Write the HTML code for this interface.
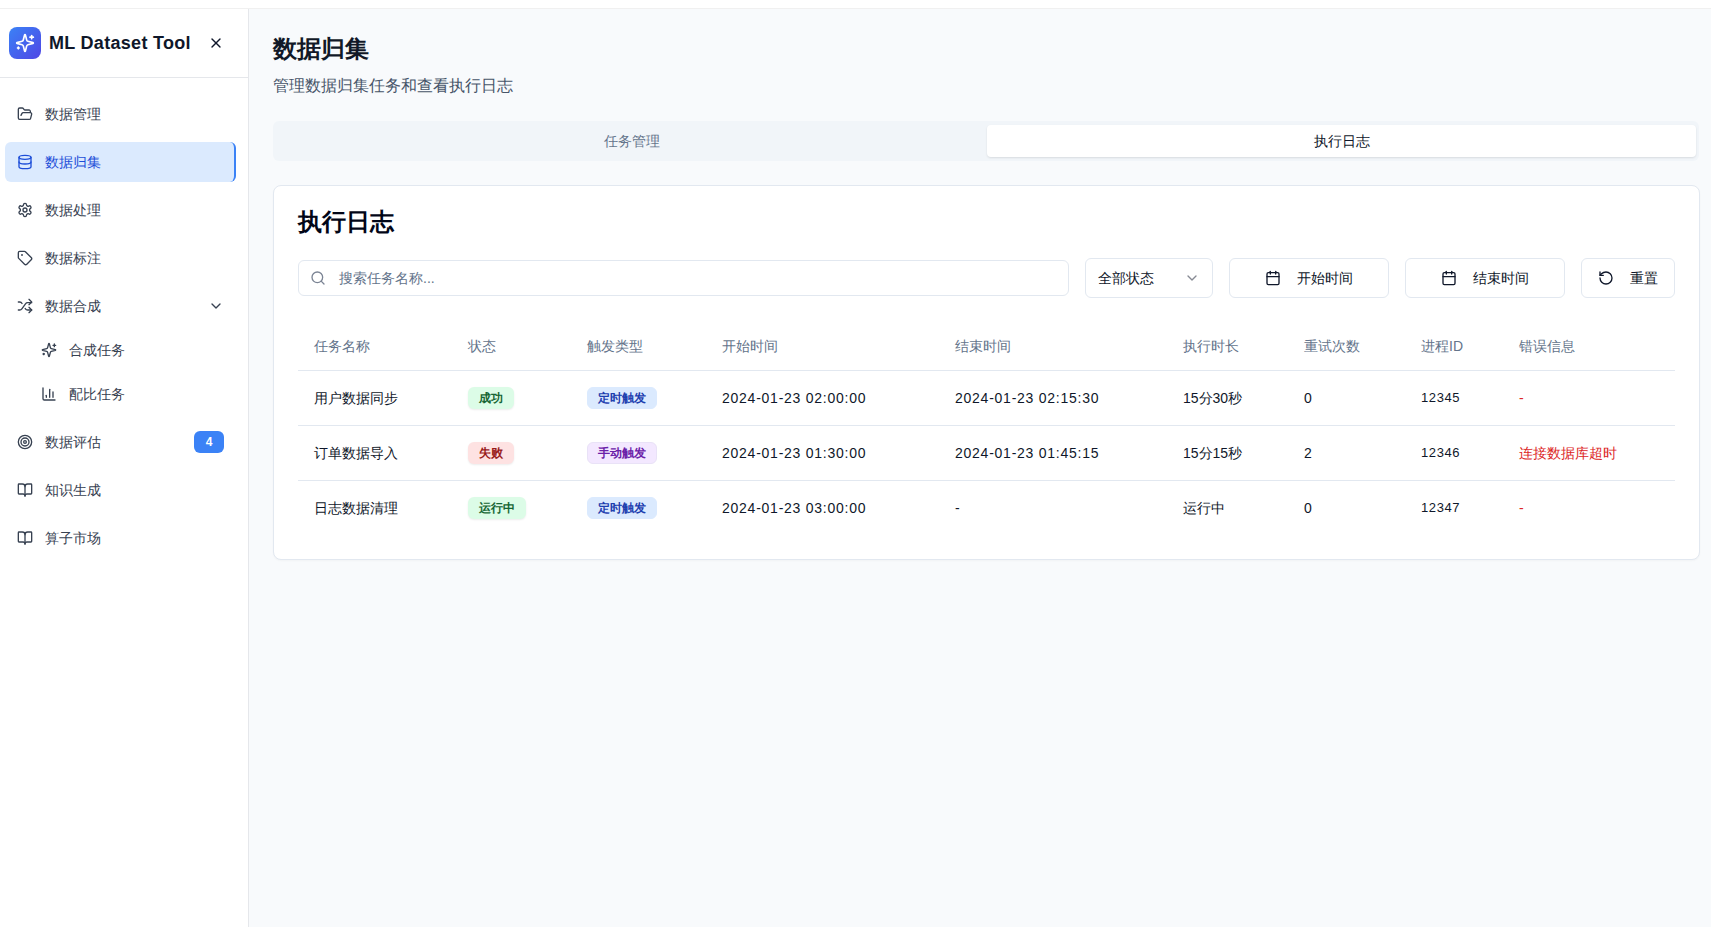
<!DOCTYPE html>
<html><head><meta charset="utf-8">
<style>
*{box-sizing:border-box;margin:0;padding:0}
html,body{width:1711px;height:927px;overflow:hidden}
body{font-family:"Liberation Sans",sans-serif;background:#f8fafc;color:#0f172a;position:relative;font-size:14px}
.abs{position:absolute}
svg.i{fill:none;stroke:currentColor;stroke-width:2;stroke-linecap:round;stroke-linejoin:round;display:block}
#top{left:0;top:0;width:1711px;height:9px;background:#fff;border-bottom:1px solid #f0f0f0}
#side{left:0;top:9px;width:249px;height:918px;background:#fff;border-right:1px solid #e5e7eb}
#sidehdr{left:0;top:9px;width:248px;height:69px;border-bottom:1px solid #e5e7eb}
.logo{left:9px;top:27px;width:32px;height:32px;border-radius:8px;background:linear-gradient(135deg,#3b82f6,#4f46e5);color:#fff}
.logo svg{position:absolute;left:6px;top:6px}
.brand{left:49px;top:32px;height:22px;line-height:22px;font-size:18px;font-weight:bold;letter-spacing:.3px;color:#0f172a;white-space:nowrap}
.nav{left:5px;width:231px;height:40px;color:#374151}
.nav svg{position:absolute;left:12px;top:12px}
.nav .t{position:absolute;left:40px;top:0;line-height:40px;font-size:14px;white-space:nowrap}
.nav.act{background:#dbeafe;color:#1d4ed8;border-right:2px solid #3b82f6;border-radius:6px}
.sub{left:29px;width:200px;height:36px;color:#374151}
.sub svg{position:absolute;left:12px;top:10px}
.sub .t{position:absolute;left:40px;top:0;line-height:36px;font-size:14px;white-space:nowrap}
.badge4{left:194px;top:431px;width:30px;height:22px;border-radius:6px;background:#3b82f6;color:#fff;font-size:12px;font-weight:bold;text-align:center;line-height:22px}
.h1{left:273px;top:33px;font-size:24px;font-weight:bold;line-height:32px;color:#111827;white-space:nowrap}
.subt{left:273px;top:74px;font-size:16px;line-height:24px;color:#475569;white-space:nowrap}
.tabs{left:273px;top:121px;width:1426px;height:40px;background:#f1f5f9;border-radius:6px}
.tab{top:125px;height:32px;line-height:32px;text-align:center;font-size:14px}
.tab1{left:277px;width:709px;color:#64748b}
.tab2{left:987px;width:709px;background:#fff;border-radius:4px;box-shadow:0 1px 2px rgba(0,0,0,.06),0 1px 3px rgba(0,0,0,.05);color:#0f172a}
.card{left:273px;top:185px;width:1427px;height:375px;background:#fff;border:1px solid #e2e8f0;border-radius:8px;box-shadow:0 1px 2px rgba(0,0,0,.03)}
.h2{left:298px;top:206px;font-size:24px;font-weight:bold;line-height:32px;color:#020617;white-space:nowrap}
.inp{left:298px;top:260px;width:771px;height:36px;border:1px solid #e2e8f0;border-radius:6px;background:#fff}
.inp svg{position:absolute;left:11px;top:9px;color:#7b8494}
.inp .t{position:absolute;left:40px;top:0;line-height:34px;color:#64748b;white-space:nowrap}
.btn{top:258px;height:40px;border:1px solid #e2e8f0;border-radius:6px;background:#fff;color:#0f172a}
.btn svg{position:absolute;top:11px}
.btn .t{position:absolute;top:0;line-height:38px;white-space:nowrap}
.th{top:334px;line-height:24px;color:#64748b;white-space:nowrap}
.hline{left:298px;width:1377px;height:1px;background:#e2e8f0}
.td{line-height:24px;color:#0f172a;white-space:nowrap}
.pill{height:22px;line-height:20px;padding:0 10px;border:1px solid transparent;border-radius:6px;font-size:12px;font-weight:bold;white-space:nowrap}
.ok{background:#dcfce7;color:#166534;box-shadow:0 1px 2px rgba(0,0,0,.08)}
.fail{background:#fee2e2;color:#991b1b;box-shadow:0 1px 2px rgba(0,0,0,.08)}
.blue{background:#dbeafe;color:#1e40af;border-color:#dbeafe}
.purple{background:#f3e8ff;color:#6b21a8;border-color:#e9e2f7}
.mono{font-size:13px;letter-spacing:.6px}
.dt{letter-spacing:.75px}
.red{color:#dc2626}
</style></head><body>
<div id="top" class="abs"></div>
<div id="side" class="abs"></div>
<div id="sidehdr" class="abs"></div>
<div class="abs logo"><svg class="i" width="20" height="20" viewBox="0 0 24 24"><path d="M9.937 15.5A2 2 0 0 0 8.5 14.063l-6.135-1.582a.5.5 0 0 1 0-.962L8.5 9.936A2 2 0 0 0 9.937 8.5l1.582-6.135a.5.5 0 0 1 .963 0L14.063 8.5A2 2 0 0 0 15.5 9.937l6.135 1.581a.5.5 0 0 1 0 .964L15.5 14.063a2 2 0 0 0-1.437 1.437l-1.582 6.135a.5.5 0 0 1-.963 0z"/><path d="M20 3v4"/><path d="M22 5h-4"/><path d="M4 17v2"/><path d="M5 18H3"/></svg></div>
<div class="abs brand">ML Dataset Tool</div>
<svg class="i abs" style="left:208px;top:35px;color:#0f172a" width="16" height="16" viewBox="0 0 24 24"><path d="M18 6 6 18"/><path d="m6 6 12 12"/></svg>
<div class="abs nav" style="top:94px"><svg class="i" width="16" height="16" viewBox="0 0 24 24"><path d="m6 14 1.5-2.9A2 2 0 0 1 9.24 10H20a2 2 0 0 1 1.94 2.5l-1.54 6a2 2 0 0 1-1.95 1.5H4a2 2 0 0 1-2-2V5a2 2 0 0 1 2-2h3.9a2 2 0 0 1 1.69.9l.81 1.2a2 2 0 0 0 1.67.9H18a2 2 0 0 1 2 2v2"/></svg><span class="t">数据管理</span></div>
<div class="abs nav act" style="top:142px"><svg class="i" width="16" height="16" viewBox="0 0 24 24"><ellipse cx="12" cy="5" rx="9" ry="3"/><path d="M3 5V19A9 3 0 0 0 21 19V5"/><path d="M3 12A9 3 0 0 0 21 12"/></svg><span class="t">数据归集</span></div>
<div class="abs nav" style="top:190px"><svg class="i" width="16" height="16" viewBox="0 0 24 24"><path d="M12.22 2h-.44a2 2 0 0 0-2 2v.18a2 2 0 0 1-1 1.73l-.43.25a2 2 0 0 1-2 0l-.15-.08a2 2 0 0 0-2.73.73l-.22.38a2 2 0 0 0 .73 2.730l.15.1a2 2 0 0 1 1 1.72v.51a2 2 0 0 1-1 1.74l-.15.09a2 2 0 0 0-.73 2.73l.22.38a2 2 0 0 0 2.73.73l.15-.08a2 2 0 0 1 2 0l.43.25a2 2 0 0 1 1 1.73V20a2 2 0 0 0 2 2h.44a2 2 0 0 0 2-2v-.18a2 2 0 0 1 1-1.73l.43-.25a2 2 0 0 1 2 0l.15.08a2 2 0 0 0 2.73-.73l.22-.39a2 2 0 0 0-.73-2.73l-.15-.08a2 2 0 0 1-1-1.74v-.5a2 2 0 0 1 1-1.74l.15-.09a2 2 0 0 0 .73-2.73l-.22-.38a2 2 0 0 0-2.73-.73l-.15.08a2 2 0 0 1-2 0l-.43-.25a2 2 0 0 1-1-1.73V4a2 2 0 0 0-2-2z"/><circle cx="12" cy="12" r="3"/></svg><span class="t">数据处理</span></div>
<div class="abs nav" style="top:238px"><svg class="i" width="16" height="16" viewBox="0 0 24 24"><path d="M12.586 2.586A2 2 0 0 0 11.172 2H4a2 2 0 0 0-2 2v7.172a2 2 0 0 0 .586 1.414l8.704 8.704a2.426 2.426 0 0 0 3.42 0l6.58-6.58a2.426 2.426 0 0 0 0-3.42z"/><circle cx="7.5" cy="7.5" r=".5" fill="currentColor"/></svg><span class="t">数据标注</span></div>
<div class="abs nav" style="top:286px"><svg class="i" width="16" height="16" viewBox="0 0 24 24"><path d="m18 14 4 4-4 4"/><path d="m18 2 4 4-4 4"/><path d="M2 18h1.973a4 4 0 0 0 3.3-1.7l5.454-7.6a4 4 0 0 1 3.3-1.7H22"/><path d="M2 6h1.972a4 4 0 0 1 3.6 2.2"/><path d="M22 18h-6.041a4 4 0 0 1-3.3-1.8l-.359-.45"/></svg><span class="t">数据合成</span><svg class="i" width="16" height="16" viewBox="0 0 24 24" style="left:203px"><path d="m6 9 6 6 6-6"/></svg></div>
<div class="abs sub" style="top:332px"><svg class="i" width="16" height="16" viewBox="0 0 24 24"><path d="M9.937 15.5A2 2 0 0 0 8.5 14.063l-6.135-1.582a.5.5 0 0 1 0-.962L8.5 9.936A2 2 0 0 0 9.937 8.5l1.582-6.135a.5.5 0 0 1 .963 0L14.063 8.5A2 2 0 0 0 15.5 9.937l6.135 1.581a.5.5 0 0 1 0 .964L15.5 14.063a2 2 0 0 0-1.437 1.437l-1.582 6.135a.5.5 0 0 1-.963 0z"/><path d="M20 3v4"/><path d="M22 5h-4"/><path d="M4 17v2"/><path d="M5 18H3"/></svg><span class="t">合成任务</span></div>
<div class="abs sub" style="top:376px"><svg class="i" width="16" height="16" viewBox="0 0 24 24"><path d="M3 3v16a2 2 0 0 0 2 2h16"/><path d="M18 17V9"/><path d="M13 17V5"/><path d="M8 17v-3"/></svg><span class="t">配比任务</span></div>
<div class="abs nav" style="top:422px"><svg class="i" width="16" height="16" viewBox="0 0 24 24"><circle cx="12" cy="12" r="10"/><circle cx="12" cy="12" r="6"/><circle cx="12" cy="12" r="2"/></svg><span class="t">数据评估</span></div>
<div class="abs nav" style="top:470px"><svg class="i" width="16" height="16" viewBox="0 0 24 24"><path d="M12 7v14"/><path d="M3 18a1 1 0 0 1-1-1V4a1 1 0 0 1 1-1h5a4 4 0 0 1 4 4 4 4 0 0 1 4-4h5a1 1 0 0 1 1 1v13a1 1 0 0 1-1 1h-6a3 3 0 0 0-3 3 3 3 0 0 0-3-3z"/></svg><span class="t">知识生成</span></div>
<div class="abs nav" style="top:518px"><svg class="i" width="16" height="16" viewBox="0 0 24 24"><path d="M12 7v14"/><path d="M3 18a1 1 0 0 1-1-1V4a1 1 0 0 1 1-1h5a4 4 0 0 1 4 4 4 4 0 0 1 4-4h5a1 1 0 0 1 1 1v13a1 1 0 0 1-1 1h-6a3 3 0 0 0-3 3 3 3 0 0 0-3-3z"/></svg><span class="t">算子市场</span></div>
<div class="abs badge4">4</div>
<div class="abs h1">数据归集</div>
<div class="abs subt">管理数据归集任务和查看执行日志</div>
<div class="abs tabs"></div><div class="abs tab tab1">任务管理</div><div class="abs tab tab2">执行日志</div>
<div class="abs card"></div>
<div class="abs h2">执行日志</div>
<div class="abs inp"><svg class="i" width="16" height="16" viewBox="0 0 24 24"><circle cx="11" cy="11" r="8"/><path d="m21 21-4.3-4.3"/></svg><span class="t">搜索任务名称...</span></div>
<div class="abs btn" style="left:1085px;width:128px"><span class="t" style="left:12px">全部状态</span><svg class="i" width="16" height="16" viewBox="0 0 24 24" style="left:98px;opacity:.5"><path d="m6 9 6 6 6-6"/></svg></div>
<div class="abs btn" style="left:1229px;width:160px"><svg class="i" width="16" height="16" viewBox="0 0 24 24" style="left:35px"><path d="M8 2v4"/><path d="M16 2v4"/><rect width="18" height="18" x="3" y="4" rx="2"/><path d="M3 10h18"/></svg><span class="t" style="left:67px">开始时间</span></div>
<div class="abs btn" style="left:1405px;width:160px"><svg class="i" width="16" height="16" viewBox="0 0 24 24" style="left:35px"><path d="M8 2v4"/><path d="M16 2v4"/><rect width="18" height="18" x="3" y="4" rx="2"/><path d="M3 10h18"/></svg><span class="t" style="left:67px">结束时间</span></div>
<div class="abs btn" style="left:1581px;width:94px"><svg class="i" width="16" height="16" viewBox="0 0 24 24" style="left:16px"><path d="M3 12a9 9 0 1 0 9-9 9.75 9.75 0 0 0-6.74 2.74L3 8"/><path d="M3 3v5h5"/></svg><span class="t" style="left:48px">重置</span></div>
<div class="abs th" style="left:314px">任务名称</div>
<div class="abs th" style="left:468px">状态</div>
<div class="abs th" style="left:587px">触发类型</div>
<div class="abs th" style="left:722px">开始时间</div>
<div class="abs th" style="left:955px">结束时间</div>
<div class="abs th" style="left:1183px">执行时长</div>
<div class="abs th" style="left:1304px">重试次数</div>
<div class="abs th" style="left:1421px">进程ID</div>
<div class="abs th" style="left:1519px">错误信息</div>
<div class="abs hline" style="top:370px"></div>
<div class="abs hline" style="top:425px"></div>
<div class="abs hline" style="top:480px"></div>
<div class="abs td" style="left:314px;top:386px">用户数据同步</div>
<div class="abs pill ok" style="left:468px;top:387px">成功</div>
<div class="abs pill blue" style="left:587px;top:387px">定时触发</div>
<div class="abs td dt" style="left:722px;top:386px">2024-01-23 02:00:00</div>
<div class="abs td dt" style="left:955px;top:386px">2024-01-23 02:15:30</div>
<div class="abs td" style="left:1183px;top:386px">15分30秒</div>
<div class="abs td" style="left:1304px;top:386px">0</div>
<div class="abs td mono" style="left:1421px;top:386px">12345</div>
<div class="abs td red" style="left:1519px;top:386px">-</div>
<div class="abs td" style="left:314px;top:441px">订单数据导入</div>
<div class="abs pill fail" style="left:468px;top:442px">失败</div>
<div class="abs pill purple" style="left:587px;top:442px">手动触发</div>
<div class="abs td dt" style="left:722px;top:441px">2024-01-23 01:30:00</div>
<div class="abs td dt" style="left:955px;top:441px">2024-01-23 01:45:15</div>
<div class="abs td" style="left:1183px;top:441px">15分15秒</div>
<div class="abs td" style="left:1304px;top:441px">2</div>
<div class="abs td mono" style="left:1421px;top:441px">12346</div>
<div class="abs td red" style="left:1519px;top:441px">连接数据库超时</div>
<div class="abs td" style="left:314px;top:496px">日志数据清理</div>
<div class="abs pill ok" style="left:468px;top:497px">运行中</div>
<div class="abs pill blue" style="left:587px;top:497px">定时触发</div>
<div class="abs td dt" style="left:722px;top:496px">2024-01-23 03:00:00</div>
<div class="abs td" style="left:955px;top:496px">-</div>
<div class="abs td" style="left:1183px;top:496px">运行中</div>
<div class="abs td" style="left:1304px;top:496px">0</div>
<div class="abs td mono" style="left:1421px;top:496px">12347</div>
<div class="abs td red" style="left:1519px;top:496px">-</div>
</body></html>
